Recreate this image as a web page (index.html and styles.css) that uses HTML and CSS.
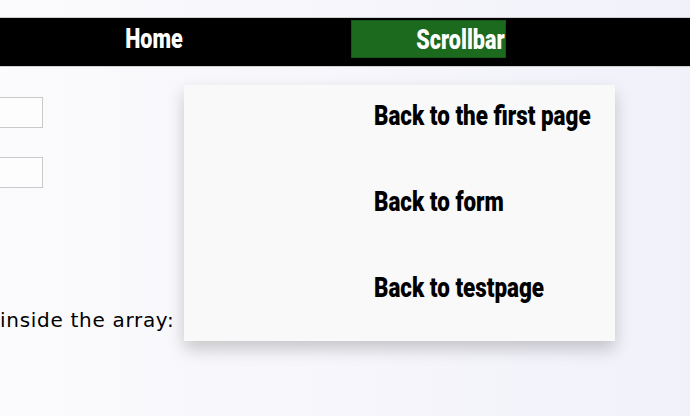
FILE: index.html
```html
<!DOCTYPE html>
<html lang="en">
<head>
<meta charset="utf-8">
<title>Scrollbar</title>
<link rel="stylesheet" href="styles.css">
</head>
<body>
<nav class="topnav">
  <a class="nav-link nav-home" href="#"><span class="cond">Home</span></a>
  <a class="nav-link nav-active" href="#"><span class="cond">Scrollbar</span></a>
</nav>
<main class="content">
  <input class="field" type="text">
  <input class="field" type="text">
  <p class="label">inside the array:</p>
</main>
<div class="dropdown">
  <a class="drop-item" href="#"><span class="cond-l">Back to the first page</span></a>
  <a class="drop-item" href="#"><span class="cond-l">Back to form</span></a>
  <a class="drop-item" href="#"><span class="cond-l">Back to testpage</span></a>
</div>
</body>
</html>
```

FILE: styles.css
```css
html, body {
  margin: 0;
  padding: 0;
  height: 100%;
  overflow: hidden;
}
body {
  background: linear-gradient(to right, #fbfbfd 0%, #f5f5fb 60%, #f1f1fa 100%);
  font-family: "Open Sans", sans-serif;
  color: #000;
}
.topnav {
  margin-top: 17px;
  height: 46px;
  background: #000;
  border-top: 1px solid #cfcfcf;
  border-bottom: 1px solid #cfcfcf;
  display: flex;
  align-items: flex-start;
  padding-top: 2px;
  box-sizing: content-box;
}
.nav-link {
  display: block;
  width: 155px;
  height: 38px;
  line-height: 38px;
  text-align: right;
  color: #fff;
  text-decoration: none;
  font-family: Roboto, sans-serif;
  font-weight: 900;
  font-size: 28px;
  overflow: hidden;
  white-space: nowrap;
}
.nav-home {
  margin-left: 28px;
}
.nav-active {
  margin-left: 168px;
  background: #1b6a1e;
  box-sizing: border-box;
  border: 1px solid #145716;
}
.cond {
  display: inline-block;
  transform: scaleX(0.77);
  transform-origin: right center;
}
.content {
  margin-left: -120px;
  padding-top: 30px;
  display: flex;
  flex-direction: column;
  align-items: flex-start;
}
.field {
  width: 163px;
  height: 31px;
  box-sizing: border-box;
  border: 1px solid #c9c9c9;
  background: #fdfdfd;
  margin: 0 0 29px 0;
}
.label {
  margin: 91px 0 0 120px;
  font-family: "DejaVu Sans", sans-serif;
  font-size: 20px;
  line-height: 24px;
  letter-spacing: 0.7px;
}
.dropdown {
  position: absolute;
  left: 184px;
  top: 85px;
  width: 431px;
  height: 256px;
  background: #f9f9f9;
  box-shadow: 0 8px 16px rgba(0, 0, 0, 0.2);
  padding-top: 8px;
  box-sizing: border-box;
}
.drop-item {
  display: block;
  height: 86px;
  line-height: 46px;
  padding-left: 190px;
  color: #000;
  text-decoration: none;
  font-family: Roboto, sans-serif;
  font-weight: 900;
  font-size: 28px;
  white-space: nowrap;
}
.cond-l {
  display: inline-block;
  transform: scaleX(0.8);
  transform-origin: left center;
}
```
